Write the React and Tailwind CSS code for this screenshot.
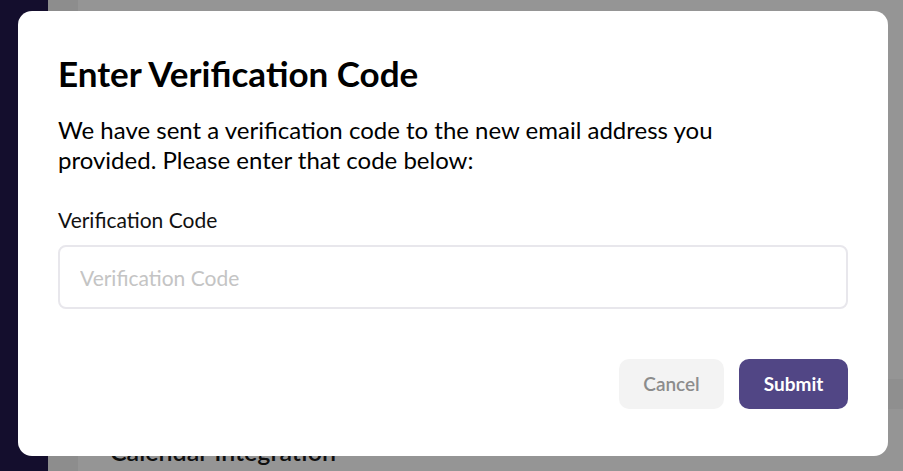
export default function App() {
  return (
    <div className="relative h-[471px] w-full overflow-hidden font-['Lato','Liberation_Sans',sans-serif]">
      {/* page behind the dialog, already dimmed */}
      <div className="flex h-full">
        <div className="w-[48px] shrink-0 bg-[#140e2d]" />
        <div className="w-[30px] shrink-0 bg-[#8d8d8d]" />
        <div className="flex flex-1 flex-col bg-[#959595]">
          <div className="h-[379px]" />
          <div className="h-[30px] bg-[#8f8f8f]" />
          <h3 className="mt-[30px] pl-[32px] text-[25px] font-semibold leading-[24px] text-[#0f0f0f]">
            Calendar Integration
          </h3>
        </div>
      </div>

      {/* dialog */}
      <div className="absolute left-[18px] top-[11px] flex h-[445px] w-[870px] flex-col rounded-[14px] bg-white px-[40px] pt-[42px]">
        <h2 className="text-[35px] font-bold leading-[40px] text-black">
          Enter Verification Code
        </h2>
        <p className="mt-[22px] max-w-[720px] text-[24px] leading-[30px] text-black">
          We have sent a verification code to the new email address you provided. Please enter that code below:
        </p>
        <label className="mt-[33px] text-[21px] leading-[24px] text-[#111]">
          Verification Code
        </label>
        <input
          type="text"
          placeholder="Verification Code"
          className="mt-[13px] h-[64px] w-full rounded-[8px] border-2 border-[#e8e7ec] px-[20px] text-[21px] outline-none placeholder:text-[#c4c4c4]"
        />
        <div className="mt-[50px] flex justify-end gap-[15px]">
          <button className="h-[50px] w-[105px] rounded-[10px] bg-[#f3f3f3] text-[19px] font-semibold text-[#8c8c8c]">
            Cancel
          </button>
          <button className="h-[50px] w-[109px] rounded-[10px] bg-[#514685] text-[19px] font-bold text-white">
            Submit
          </button>
        </div>
      </div>
    </div>
  );
}
